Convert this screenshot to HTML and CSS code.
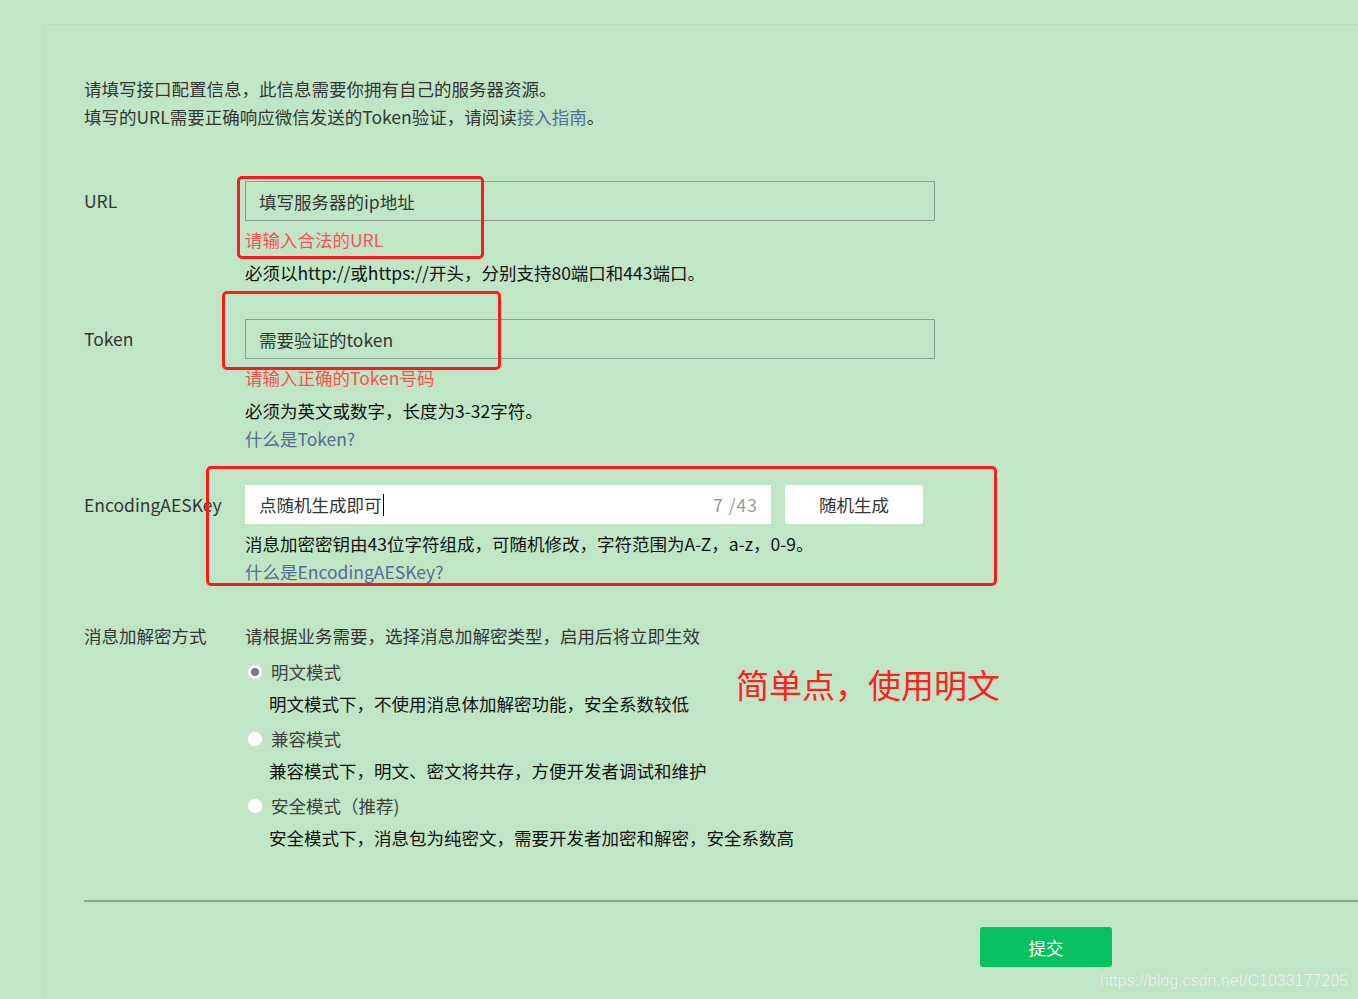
FILE: index.html
```html
<!DOCTYPE html>
<html lang="zh-CN">
  <head>
    <meta charset="utf-8" />
    <meta name="viewport" content="width=device-width, initial-scale=1.0" />

    <title>服务器配置</title>

    <link rel="stylesheet" href="styles.css">
  </head>
  <body>
    <div class="page">
      <div class="panel">
        <div class="intro">
          <p>请填写接口配置信息，此信息需要你拥有自己的服务器资源。</p>
          <p>填写的URL需要正确响应微信发送的Token验证，请阅读<a href="#">接入指南</a>。</p>
        </div>

        <div class="form">
          <div class="row">
            <label class="label" for="url">URL</label>
            <div class="field">
              <input id="url" class="input" type="text" value="填写服务器的ip地址" />
              <p class="error">请输入合法的URL</p>
              <p class="tip">必须以http://或https://开头，分别支持80端口和443端口。</p>
            </div>
          </div>

          <div class="row">
            <label class="label" for="token">Token</label>
            <div class="field">
              <input id="token" class="input" type="text" value="需要验证的token" />
              <p class="error">请输入正确的Token号码</p>
              <p class="tip">必须为英文或数字，长度为3-32字符。</p>
              <p class="tip"><a href="#">什么是Token?</a></p>
            </div>
          </div>

          <div class="row row-aes">
            <label class="label">EncodingAESKey</label>
            <div class="field">
              <div class="aes-line">
                <div class="aes-input">
                  <span class="aes-value">点随机生成即可<span class="caret"></span></span>
                  <span class="counter">7 /43</span>
                </div>
                <button class="btn-random" type="button">随机生成</button>
              </div>
              <p class="tip tip-aes">消息加密密钥由43位字符组成，可随机修改，字符范围为A-Z，a-z，0-9。</p>
              <p class="tip"><a href="#">什么是EncodingAESKey?</a></p>
            </div>
          </div>

          <div class="row row-mode">
            <span class="label label-text">消息加解密方式</span>
            <div class="field">
              <p class="mode-hint">请根据业务需要，选择消息加解密类型，启用后将立即生效</p>
              <div class="option">
                <p class="option-title"><span class="radio is-checked"></span>明文模式</p>
                <p class="option-desc">明文模式下，不使用消息体加解密功能，安全系数较低</p>
              </div>
              <div class="option">
                <p class="option-title"><span class="radio"></span>兼容模式</p>
                <p class="option-desc">兼容模式下，明文、密文将共存，方便开发者调试和维护</p>
              </div>
              <div class="option">
                <p class="option-title"><span class="radio"></span>安全模式（推荐)</p>
                <p class="option-desc">安全模式下，消息包为纯密文，需要开发者加密和解密，安全系数高</p>
              </div>
            </div>
          </div>
        </div>

        <div class="form-footer">
          <button class="btn-submit" type="button">提交</button>
        </div>
      </div>

      <!-- annotations drawn on top of the screenshot -->
      <div class="mark mark-url"></div>
      <div class="mark mark-token"></div>
      <div class="mark mark-aes"></div>
      <div class="note">简单点，使用明文</div>
      <div class="watermark">https://blog.csdn.net/C1033177205</div>
    </div>
  </body>
</html>
```

FILE: styles.css
```css
:root {
  font-family: "Noto Sans CJK SC", "Microsoft YaHei", sans-serif;
}

html,
body {
  margin: 0;
  height: 100%;
  overflow: hidden;
}

body {
  background: #c1e6c6;
  color: #353535;
  font-size: 17.5px;
  line-height: 28px;
}

p {
  margin: 0;
}

a {
  color: #576b95;
  text-decoration: none;
}

input,
button {
  border: 0;
  border-radius: 0;
  background-color: transparent;
  font-size: inherit;
  font-family: inherit;
  color: inherit;
  outline: none;
  appearance: none;
}

.page {
  position: relative;
  height: 100%;
  padding: 24px 0 0 44px;
  box-sizing: border-box;
}

.panel {
  padding: 50px 0 0 39px;
  border-top: 1px solid #b9dfbe;
  border-left: 1px solid #b9dfbe;
  height: 100%;
  box-sizing: border-box;
}

.intro {
  margin-bottom: 50px;
}

.row {
  display: grid;
  grid-template-columns: 161px 1fr;
  margin-bottom: 32px;
}

.row-aes {
  margin-bottom: 36px;
}

.label {
  line-height: 40px;
  color: #353535;
  white-space: nowrap;
}

.label-text {
  line-height: 28px;
}

.input {
  display: block;
  width: 690px;
  height: 40px;
  box-sizing: border-box;
  border: 1px solid #8d9e91;
  padding: 0 13px;
  color: #353535;
}

.error {
  margin-top: 5px;
  color: #fa5151;
}

.tip {
  color: #111;
}

.error + .tip {
  margin-top: 5px;
}

.tip a {
  color: #576b95;
}

.aes-line {
  display: flex;
  gap: 14px;
}

.aes-input {
  display: flex;
  justify-content: space-between;
  align-items: center;
  width: 526px;
  height: 39px;
  box-sizing: border-box;
  padding: 0 13px 0 14px;
  background: #fff;
}

.aes-value {
  display: flex;
  align-items: center;
}

.caret {
  display: inline-block;
  width: 1px;
  height: 22px;
  margin-left: 1px;
  background: #000;
}

.counter {
  color: #9a9a9a;
  letter-spacing: 1px;
}

.btn-random {
  width: 138px;
  height: 39px;
  background: #fff;
  border-radius: 3px;
  color: #353535;
  text-align: center;
}

.tip-aes {
  margin-top: 6px;
}

.mode-hint {
  margin-bottom: 8px;
}

.option {
  margin-bottom: 7px;
}

.option-title {
  display: flex;
  align-items: center;
  color: #404040;
}

.option-desc {
  margin-top: 4px;
  padding-left: 24px;
  color: #111;
}

.radio {
  width: 14px;
  height: 14px;
  margin: 0 8px 0 2px;
  border: 1px solid #dcdcdc;
  border-radius: 50%;
  background: #fff;
  position: relative;
}

.radio.is-checked::after {
  content: "";
  position: absolute;
  left: 3px;
  top: 3px;
  width: 8px;
  height: 8px;
  border-radius: 50%;
  background: #7a7a7a;
}

.form-footer {
  margin-top: 41px;
  padding: 25px 0 0 896px;
  border-top: 2px solid #8aa68f;
}

.btn-submit {
  width: 132px;
  height: 40px;
  border-radius: 3px;
  background: #07c160;
  color: #fff;
  text-align: center;
}

/* annotations */
.mark {
  position: absolute;
  border: 3px solid #ff1a1a;
  border-radius: 5px;
  box-sizing: border-box;
}

.mark-url {
  left: 237px;
  top: 176px;
  width: 247px;
  height: 83px;
}

.mark-token {
  left: 222px;
  top: 291px;
  width: 279px;
  height: 79px;
}

.mark-aes {
  left: 206px;
  top: 466px;
  width: 791px;
  height: 120px;
}

.note {
  position: absolute;
  left: 736px;
  top: 664px;
  font-size: 33px;
  line-height: 40px;
  color: #ff2020;
  white-space: nowrap;
}

.watermark {
  position: absolute;
  right: 10px;
  bottom: 8px;
  font-family: "Liberation Sans", Arial, sans-serif;
  font-size: 16px;
  line-height: 20px;
  color: rgba(255, 255, 255, 0.75);
  text-shadow: 0 0 1px rgba(0, 0, 0, 0.15);
}
```
